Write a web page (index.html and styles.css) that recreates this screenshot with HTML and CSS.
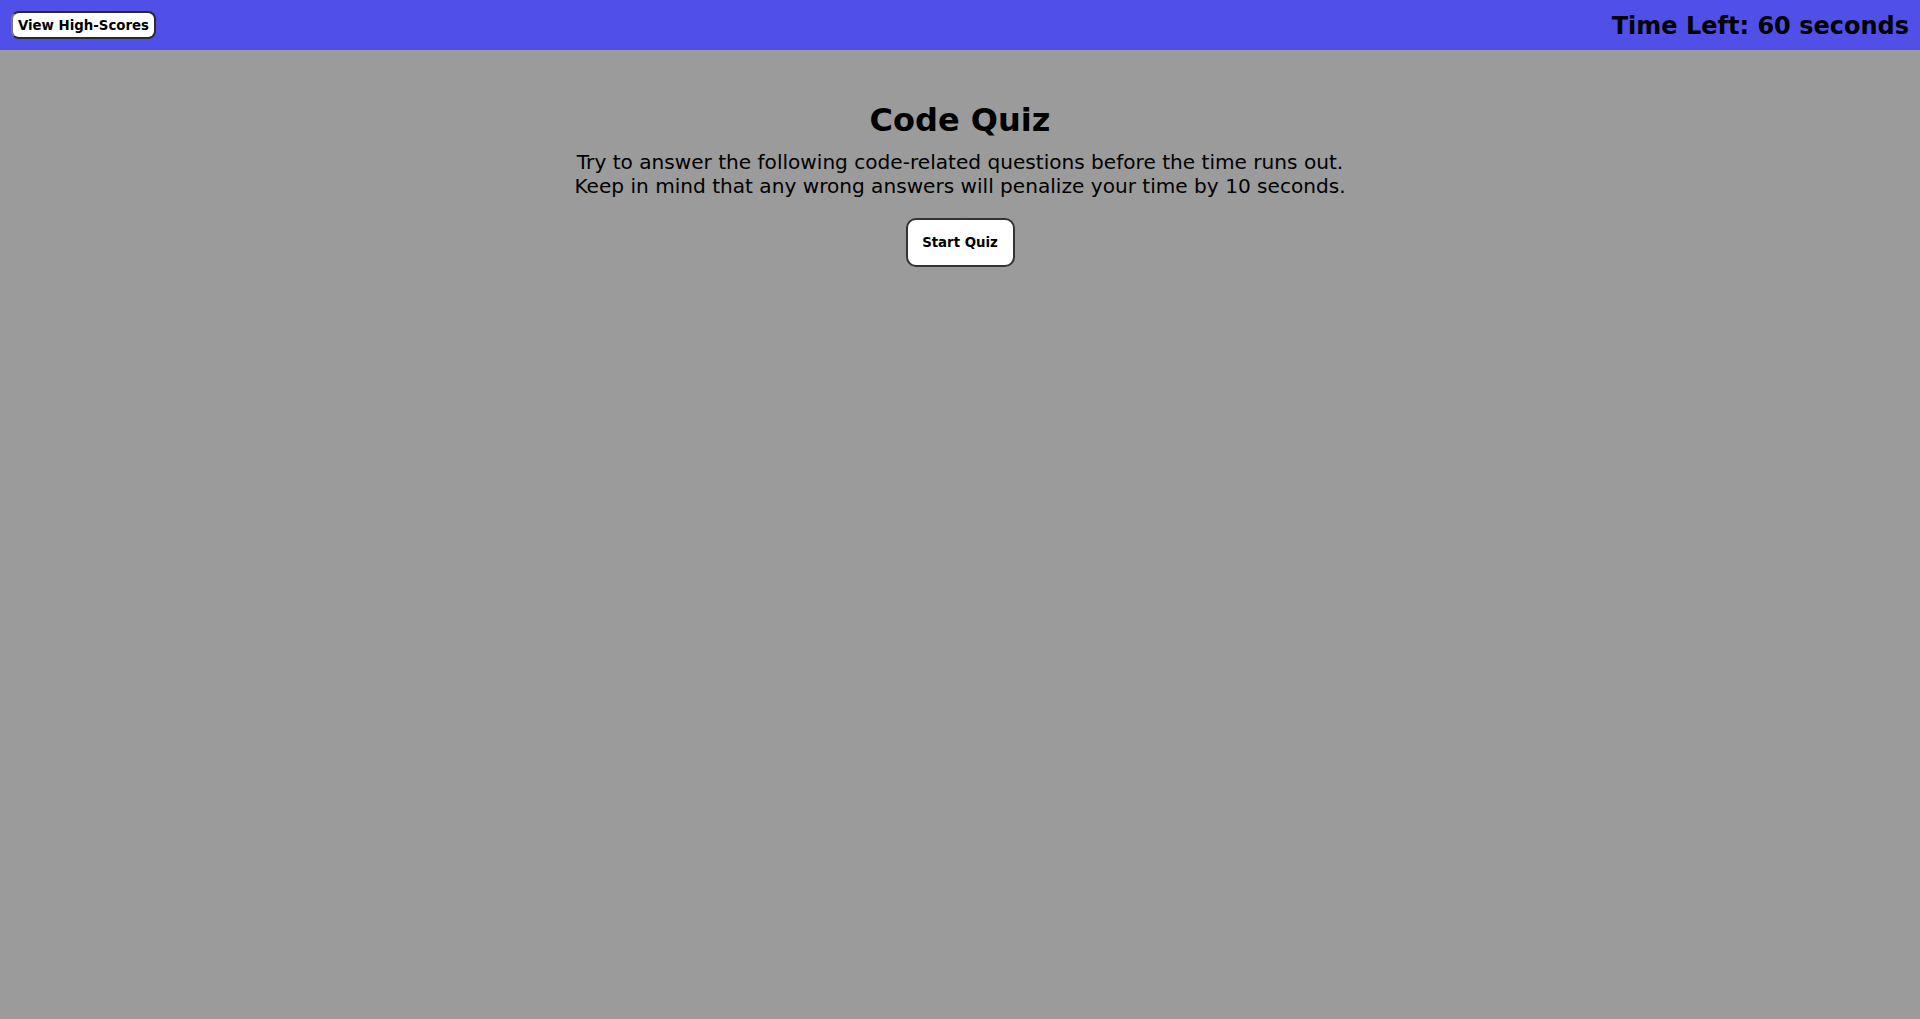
FILE: index.html
```html
<!DOCTYPE html>
<html lang="en">
<head>
<meta charset="utf-8">
<title>Code Quiz</title>
<link rel="stylesheet" href="styles.css">
</head>
<body>
<header class="topbar">
  <button class="btn btn-scores">View High-Scores</button>
  <div class="timer">Time Left: 60 seconds</div>
</header>
<main class="intro">
  <h1 class="title">Code Quiz</h1>
  <p class="desc">Try to answer the following code-related questions before the time runs out.<br>Keep in mind that any wrong answers will penalize your time by 10 seconds.</p>
  <button class="btn btn-start">Start Quiz</button>
</main>
</body>
</html>
```
FILE: styles.css
```css
html, body {
  margin: 0;
  padding: 0;
  height: 100%;
}
body {
  background: #9b9b9b;
  font-family: "DejaVu Sans", Verdana, sans-serif;
  color: #000;
}
.topbar {
  height: 50px;
  box-sizing: border-box;
  background: #5050e8;
  display: flex;
  align-items: center;
  justify-content: space-between;
  padding: 0 11px;
}
.timer {
  font-size: 24px;
  font-weight: bold;
  margin-top: 2px;
}
.btn {
  font-family: "DejaVu Sans", Verdana, sans-serif;
  font-weight: bold;
  font-size: 13.33px;
  background: #fff;
  color: #000;
  border: 2px solid #333;
  cursor: pointer;
}
.btn-scores {
  height: 28px;
  width: 145px;
  padding: 0;
  border-radius: 8px;
  border-color: #2a2a2a #2a2a2a #2a2a2a #777;
}
.intro {
  display: flex;
  flex-direction: column;
  align-items: center;
  text-align: center;
}
.title {
  font-size: 32px;
  margin: 51px 0 0;
}
.desc {
  font-size: 20.1px;
  margin: 11px 0 0;
}
.btn-start {
  margin-top: 20px;
  width: 109px;
  height: 49px;
  padding: 0;
  border-radius: 10px;
}
```
